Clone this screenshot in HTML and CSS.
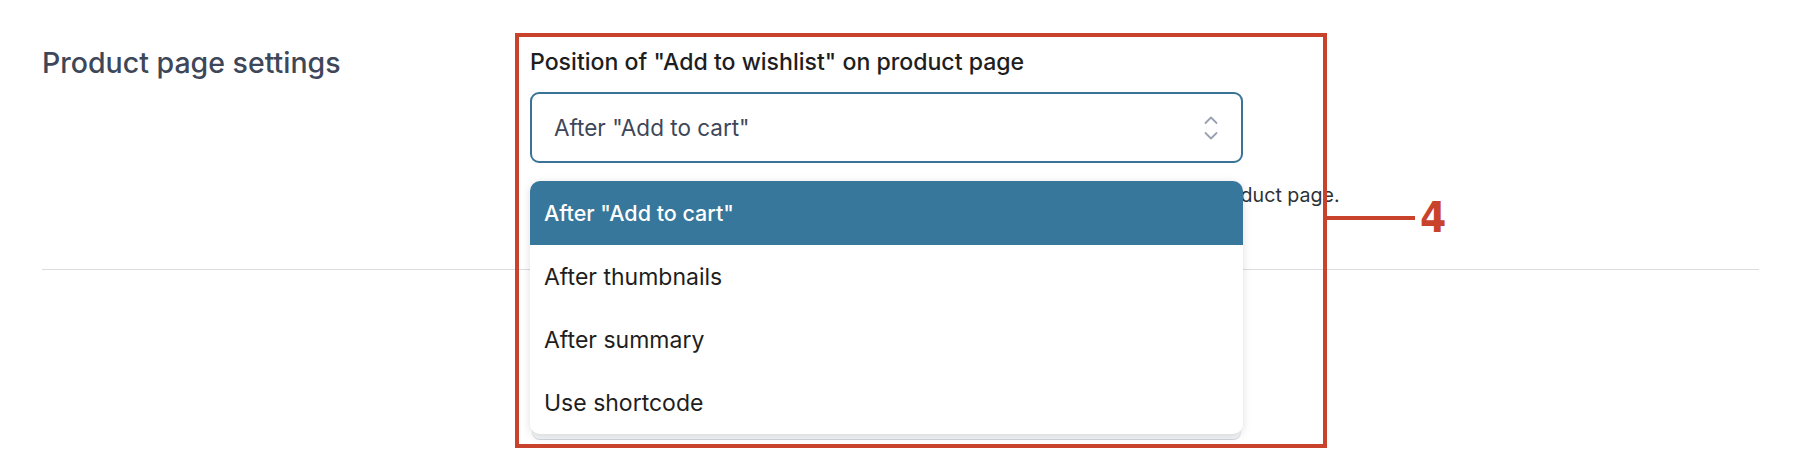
FILE: index.html
```html
<!DOCTYPE html>
<html lang="en">
  <head>
    <meta charset="UTF-8" />
    <meta name="viewport" content="width=device-width, initial-scale=1.0" />
    <title>Product page settings</title>
    <link rel="stylesheet" href="styles.css">
  </head>
  <body>
    <main class="page">
      <section class="settings">
        <h2 class="settings-title">Product page settings</h2>
        <div class="field">
          <label class="field-label">Position of "Add to wishlist" on product page</label>
          <div class="select-wrap">
            <div class="select">
              <span>After "Add to cart"</span>
              <svg class="chevrons" width="16" height="30" viewBox="0 0 16 30">
                <path d="M2.5 10 L8 4.5 L13.5 10" />
                <path d="M2.5 20 L8 25.5 L13.5 20" />
              </svg>
            </div>
            <ul class="dropdown">
              <li class="active">After "Add to cart"</li>
              <li>After thumbnails</li>
              <li>After summary</li>
              <li>Use shortcode</li>
            </ul>
          </div>
          <p class="field-help">Choose where the "Add to wishlist" button will be displayed on the single product page.</p>
        </div>
      </section>
      <hr class="divider" />

      <div class="callout"></div>
      <div class="callout-marker">
        <span class="callout-line"></span>
        <span class="callout-num">4</span>
      </div>
    </main>
  </body>
</html>
```

FILE: styles.css
```css
* {
  box-sizing: border-box;
}
body {
  margin: 0;
  padding: 0;
  background-color: #fff;
  font-family: Inter, "Noto Sans", "Liberation Sans", sans-serif;
  color: #1e1e1e;
}
ul {
  list-style: none;
  margin: 0;
  padding: 0;
}
.page {
  position: relative;
  width: 1800px;
  height: 457px;
  overflow: hidden;
}
.settings {
  display: flex;
  padding: 48px 0 0 42px;
}
.settings-title {
  width: 488px;
  margin: 0;
  font-size: 28.5px;
  line-height: 30px;
  font-weight: 520;
  color: #3d4759;
}
.field {
  width: 713px;
}
.field-label {
  display: block;
  font-size: 23.1px;
  line-height: 28px;
  font-weight: 450;
  color: #1e1e1e;
}
.select-wrap {
  position: relative;
  margin-top: 16px;
}
.select {
  height: 71px;
  display: flex;
  align-items: center;
  justify-content: space-between;
  padding: 0 22px 0 22px;
  border: 2.5px solid #3a7396;
  border-radius: 9px;
  font-size: 22.5px;
  color: #3d4759;
}
.chevrons {
  margin-top: 1px;
}
.chevrons path {
  fill: none;
  stroke: #98a1b2;
  stroke-width: 1.8;
  stroke-linecap: round;
  stroke-linejoin: round;
}
.dropdown {
  position: absolute;
  top: calc(100% + 18px);
  left: 0;
  width: 713px;
  background-color: #fff;
  border-radius: 10px;
  z-index: 5;
  box-shadow: 0 2px 10px rgba(0, 0, 0, 0.13), 0 7px 0 -2px #f4f5f7, 0 8px 0 -2px #cfd5de;
}
.dropdown li {
  height: 63px;
  display: flex;
  align-items: center;
  padding-left: 14px;
  font-size: 23px;
  color: #1e1e1e;
}
.dropdown li.active {
  height: 64px;
  background-color: #36779b;
  color: #fff;
  font-size: 21.5px;
  font-weight: 500;
  border-radius: 10px 10px 0 0;
}
.field-help {
  margin: 18px 0 0;
  font-size: 19.6px;
  line-height: 28px;
  color: #2c3338;
  white-space: nowrap;
}
.divider {
  margin: 60px 41px 0 42px;
  border: 0;
  border-top: 1.5px solid #dcdcde;
}
.callout {
  position: absolute;
  left: 515px;
  top: 33px;
  width: 812px;
  height: 415px;
  border: 4px solid #c9432c;
  z-index: 10;
}
.callout-marker {
  position: absolute;
  left: 1325px;
  top: 197px;
  display: flex;
  align-items: center;
  z-index: 10;
}
.callout-line {
  width: 90px;
  height: 4px;
  background-color: #c9432c;
}
.callout-num {
  margin-left: 5px;
  font-family: "DejaVu Sans Condensed", "DejaVu Sans", sans-serif;
  font-stretch: condensed;
  font-weight: 700;
  font-size: 42px;
  line-height: 42px;
  color: #c9432c;
}
```
